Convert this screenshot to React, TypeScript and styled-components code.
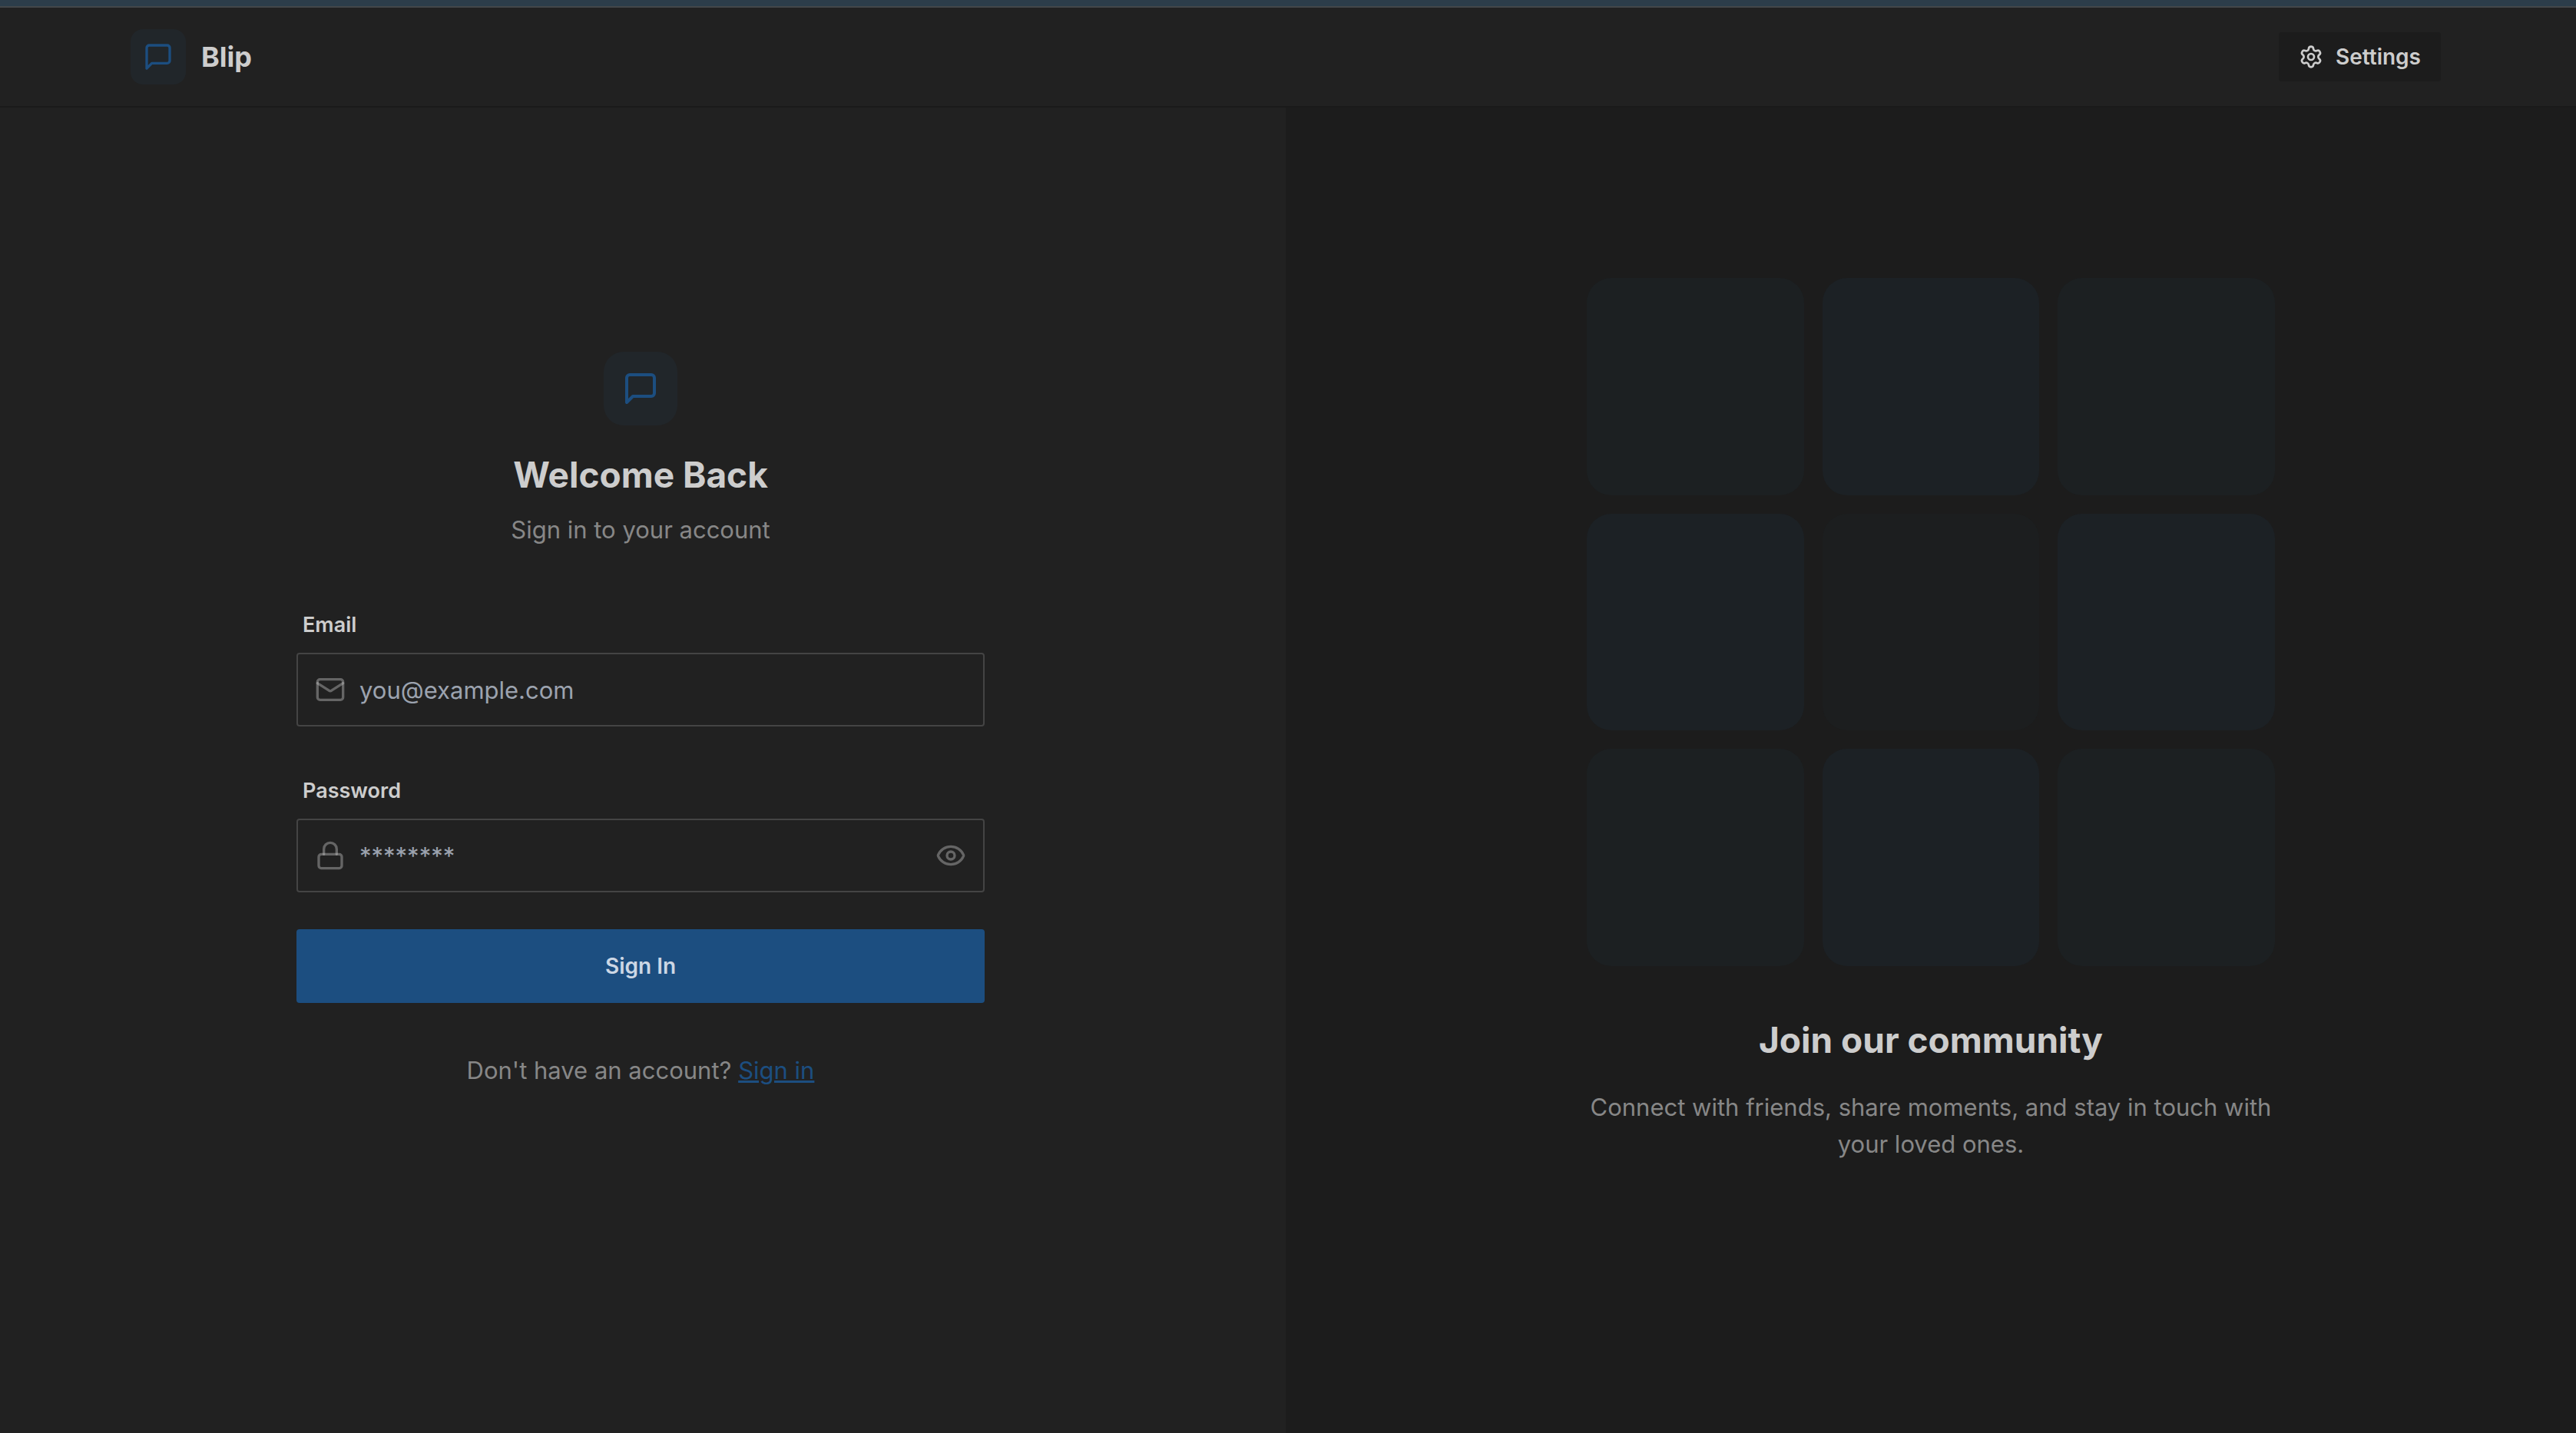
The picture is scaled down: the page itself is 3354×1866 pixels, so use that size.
import React, { useState } from "react";
import styled, { createGlobalStyle } from "styled-components";
import { Eye, EyeOff, Lock, Mail, Settings } from "lucide-react";

const color = {
  page: "#212121",
  panel: "#1c1c1c",
  text: "#cdcdcd",
  muted: "#878787",
  line: "#444444",
  faint: "rgba(205, 205, 205, 0.4)",
  primary: "#1c4e80",
  onPrimary: "#ccd7e5",
  placeholder: "#9ca3af",
};

const GlobalStyle = createGlobalStyle`
  *, *::before, *::after { box-sizing: border-box; }
  body {
    margin: 0;
    background: ${color.page};
    color: ${color.text};
    font-family: Inter, "Liberation Sans", sans-serif;
    font-size: 31px;
    line-height: 48px;
  }
  h1, h2, p { margin: 0; }
  button, input { font: inherit; color: inherit; }
  svg { display: block; flex: none; }
`;

const Page = styled.div`
  min-height: 100vh;
  display: flex;
  flex-direction: column;
`;

const TopStrip = styled.div`
  height: 10px;
  background: #2c3d4a;
  border-bottom: 2px solid #434749;
`;

const Header = styled.header`
  height: 130px;
  padding: 0 176px 0 170px;
  display: flex;
  align-items: center;
  justify-content: space-between;
  border-bottom: 2px solid #1a1a1a;
`;

const Brand = styled.a`
  display: flex;
  align-items: center;
  gap: 20px;
  color: inherit;
  text-decoration: none;
`;

const BrandName = styled.span`
  font-size: 36px;
  font-weight: 700;
`;

const LogoTile = styled.span<{ $large?: boolean }>`
  display: grid;
  place-items: center;
  width: ${(p) => (p.$large ? 96 : 72)}px;
  height: ${(p) => (p.$large ? 96 : 72)}px;
  border-radius: ${(p) => (p.$large ? 26 : 16)}px;
  background: #21262a;
  color: ${color.primary};
`;

const SettingsButton = styled.button`
  display: flex;
  align-items: center;
  gap: 16px;
  height: 64px;
  padding: 0 26px;
  border: 0;
  border-radius: 4px;
  background: ${color.panel};
  font-size: 28px;
  font-weight: 600;
  cursor: pointer;
`;

const Main = styled.main`
  flex: 1;
  display: grid;
  grid-template-columns: calc(50% - 3px) 1fr;
`;

const Pane = styled.section<{ $tinted?: boolean }>`
  display: flex;
  align-items: center;
  justify-content: center;
  padding: ${(p) => (p.$tinted ? "0 0 130px" : "0 6px 130px 0")};
  background: ${(p) => (p.$tinted ? color.panel : color.page)};
`;

const Column = styled.div`
  width: 100%;
  max-width: 896px;
  text-align: center;
`;

const Intro = styled.div`
  display: flex;
  flex-direction: column;
  align-items: center;
  gap: 16px;
  margin-bottom: 64px;
`;

const Title = styled.h1`
  margin-top: 16px;
  font-size: 46px;
  line-height: 64px;
  font-weight: 700;
`;

const Muted = styled.p`
  color: ${color.muted};
`;

const Form = styled.form`
  display: flex;
  flex-direction: column;
  gap: 48px;
`;

const Field = styled.div`
  text-align: left;
`;

const Label = styled.label`
  display: block;
  padding: 16px 8px;
  font-size: 27px;
  line-height: 40px;
  font-weight: 600;
`;

const Control = styled.div`
  display: flex;
  align-items: center;
  gap: 18px;
  height: 96px;
  padding: 0 22px;
  border: 2px solid ${color.line};
  border-radius: 4px;
  color: ${color.faint};
`;

const Input = styled.input`
  flex: 1;
  min-width: 0;
  height: 100%;
  padding: 0;
  border: 0;
  outline: 0;
  background: transparent;
  color: ${color.text};
  &::placeholder {
    color: ${color.placeholder};
    opacity: 1;
  }
`;

const IconButton = styled.button`
  padding: 0;
  border: 0;
  background: transparent;
  cursor: pointer;
`;

const Submit = styled.button`
  height: 96px;
  border: 0;
  border-radius: 4px;
  background: ${color.primary};
  color: ${color.onPrimary};
  font-size: 28px;
  font-weight: 600;
  cursor: pointer;
`;

const Footer = styled.p`
  margin-top: 64px;
  color: ${color.muted};
`;

const Link = styled.a`
  color: ${color.primary};
  text-decoration: underline;
`;

const Tiles = styled.div`
  display: grid;
  grid-template-columns: repeat(3, 1fr);
  gap: 24px;
  margin-bottom: 64px;
`;

const tileTone = { low: "#1c1e1f", mid: "#1c2022", high: "#1c2125" };

const Tile = styled.div<{ $tone: keyof typeof tileTone }>`
  aspect-ratio: 1;
  border-radius: 32px;
  background: ${(p) => tileTone[p.$tone]};
`;

const PromoTitle = styled.h2`
  margin-bottom: 32px;
  font-size: 46px;
  line-height: 64px;
  font-weight: 700;
`;

const ChatIcon = ({ size }: { size: number }) => (
  <svg
    width={size}
    height={size}
    viewBox="0 0 24 24"
    fill="none"
    stroke="currentColor"
    strokeWidth="2"
    strokeLinecap="round"
    strokeLinejoin="round"
    aria-hidden="true"
  >
    <path d="M21 15a2 2 0 0 1-2 2H7l-4 4V5a2 2 0 0 1 2-2h14a2 2 0 0 1 2 2z" />
  </svg>
);

const tiles: (keyof typeof tileTone)[] = [
  "mid", "high", "mid",
  "high", "low", "high",
  "mid", "high", "mid",
];

export default function App() {
  const [visible, setVisible] = useState(false);

  return (
    <Page>
      <GlobalStyle />
      <TopStrip />
      <Header>
        <Brand href="#">
          <LogoTile>
            <ChatIcon size={40} />
          </LogoTile>
          <BrandName>Blip</BrandName>
        </Brand>
        <SettingsButton type="button">
          <Settings size={32} />
          <span>Settings</span>
        </SettingsButton>
      </Header>
      <Main>
        <Pane>
          <Column>
            <Intro>
              <LogoTile $large>
                <ChatIcon size={48} />
              </LogoTile>
              <Title>Welcome Back</Title>
              <Muted>Sign in to your account</Muted>
            </Intro>
            <Form onSubmit={(e) => e.preventDefault()}>
              <Field>
                <Label htmlFor="email">Email</Label>
                <Control>
                  <Mail size={40} />
                  <Input id="email" type="email" placeholder="you@example.com" />
                </Control>
              </Field>
              <Field>
                <Label htmlFor="password">Password</Label>
                <Control>
                  <Lock size={40} />
                  <Input
                    id="password"
                    type={visible ? "text" : "password"}
                    placeholder="********"
                  />
                  <IconButton
                    type="button"
                    aria-label={visible ? "Hide password" : "Show password"}
                    onClick={() => setVisible(!visible)}
                  >
                    {visible ? <EyeOff size={40} /> : <Eye size={40} />}
                  </IconButton>
                </Control>
              </Field>
              <Submit type="submit">Sign In</Submit>
            </Form>
            <Footer>
              Don't have an account? <Link href="#">Sign in</Link>
            </Footer>
          </Column>
        </Pane>
        <Pane $tinted>
          <Column>
            <Tiles aria-hidden="true">
              {tiles.map((tone, i) => (
                <Tile key={i} $tone={tone} />
              ))}
            </Tiles>
            <PromoTitle>Join our community</PromoTitle>
            <Muted>
              Connect with friends, share moments, and stay in touch with your
              loved ones.
            </Muted>
          </Column>
        </Pane>
      </Main>
    </Page>
  );
}
